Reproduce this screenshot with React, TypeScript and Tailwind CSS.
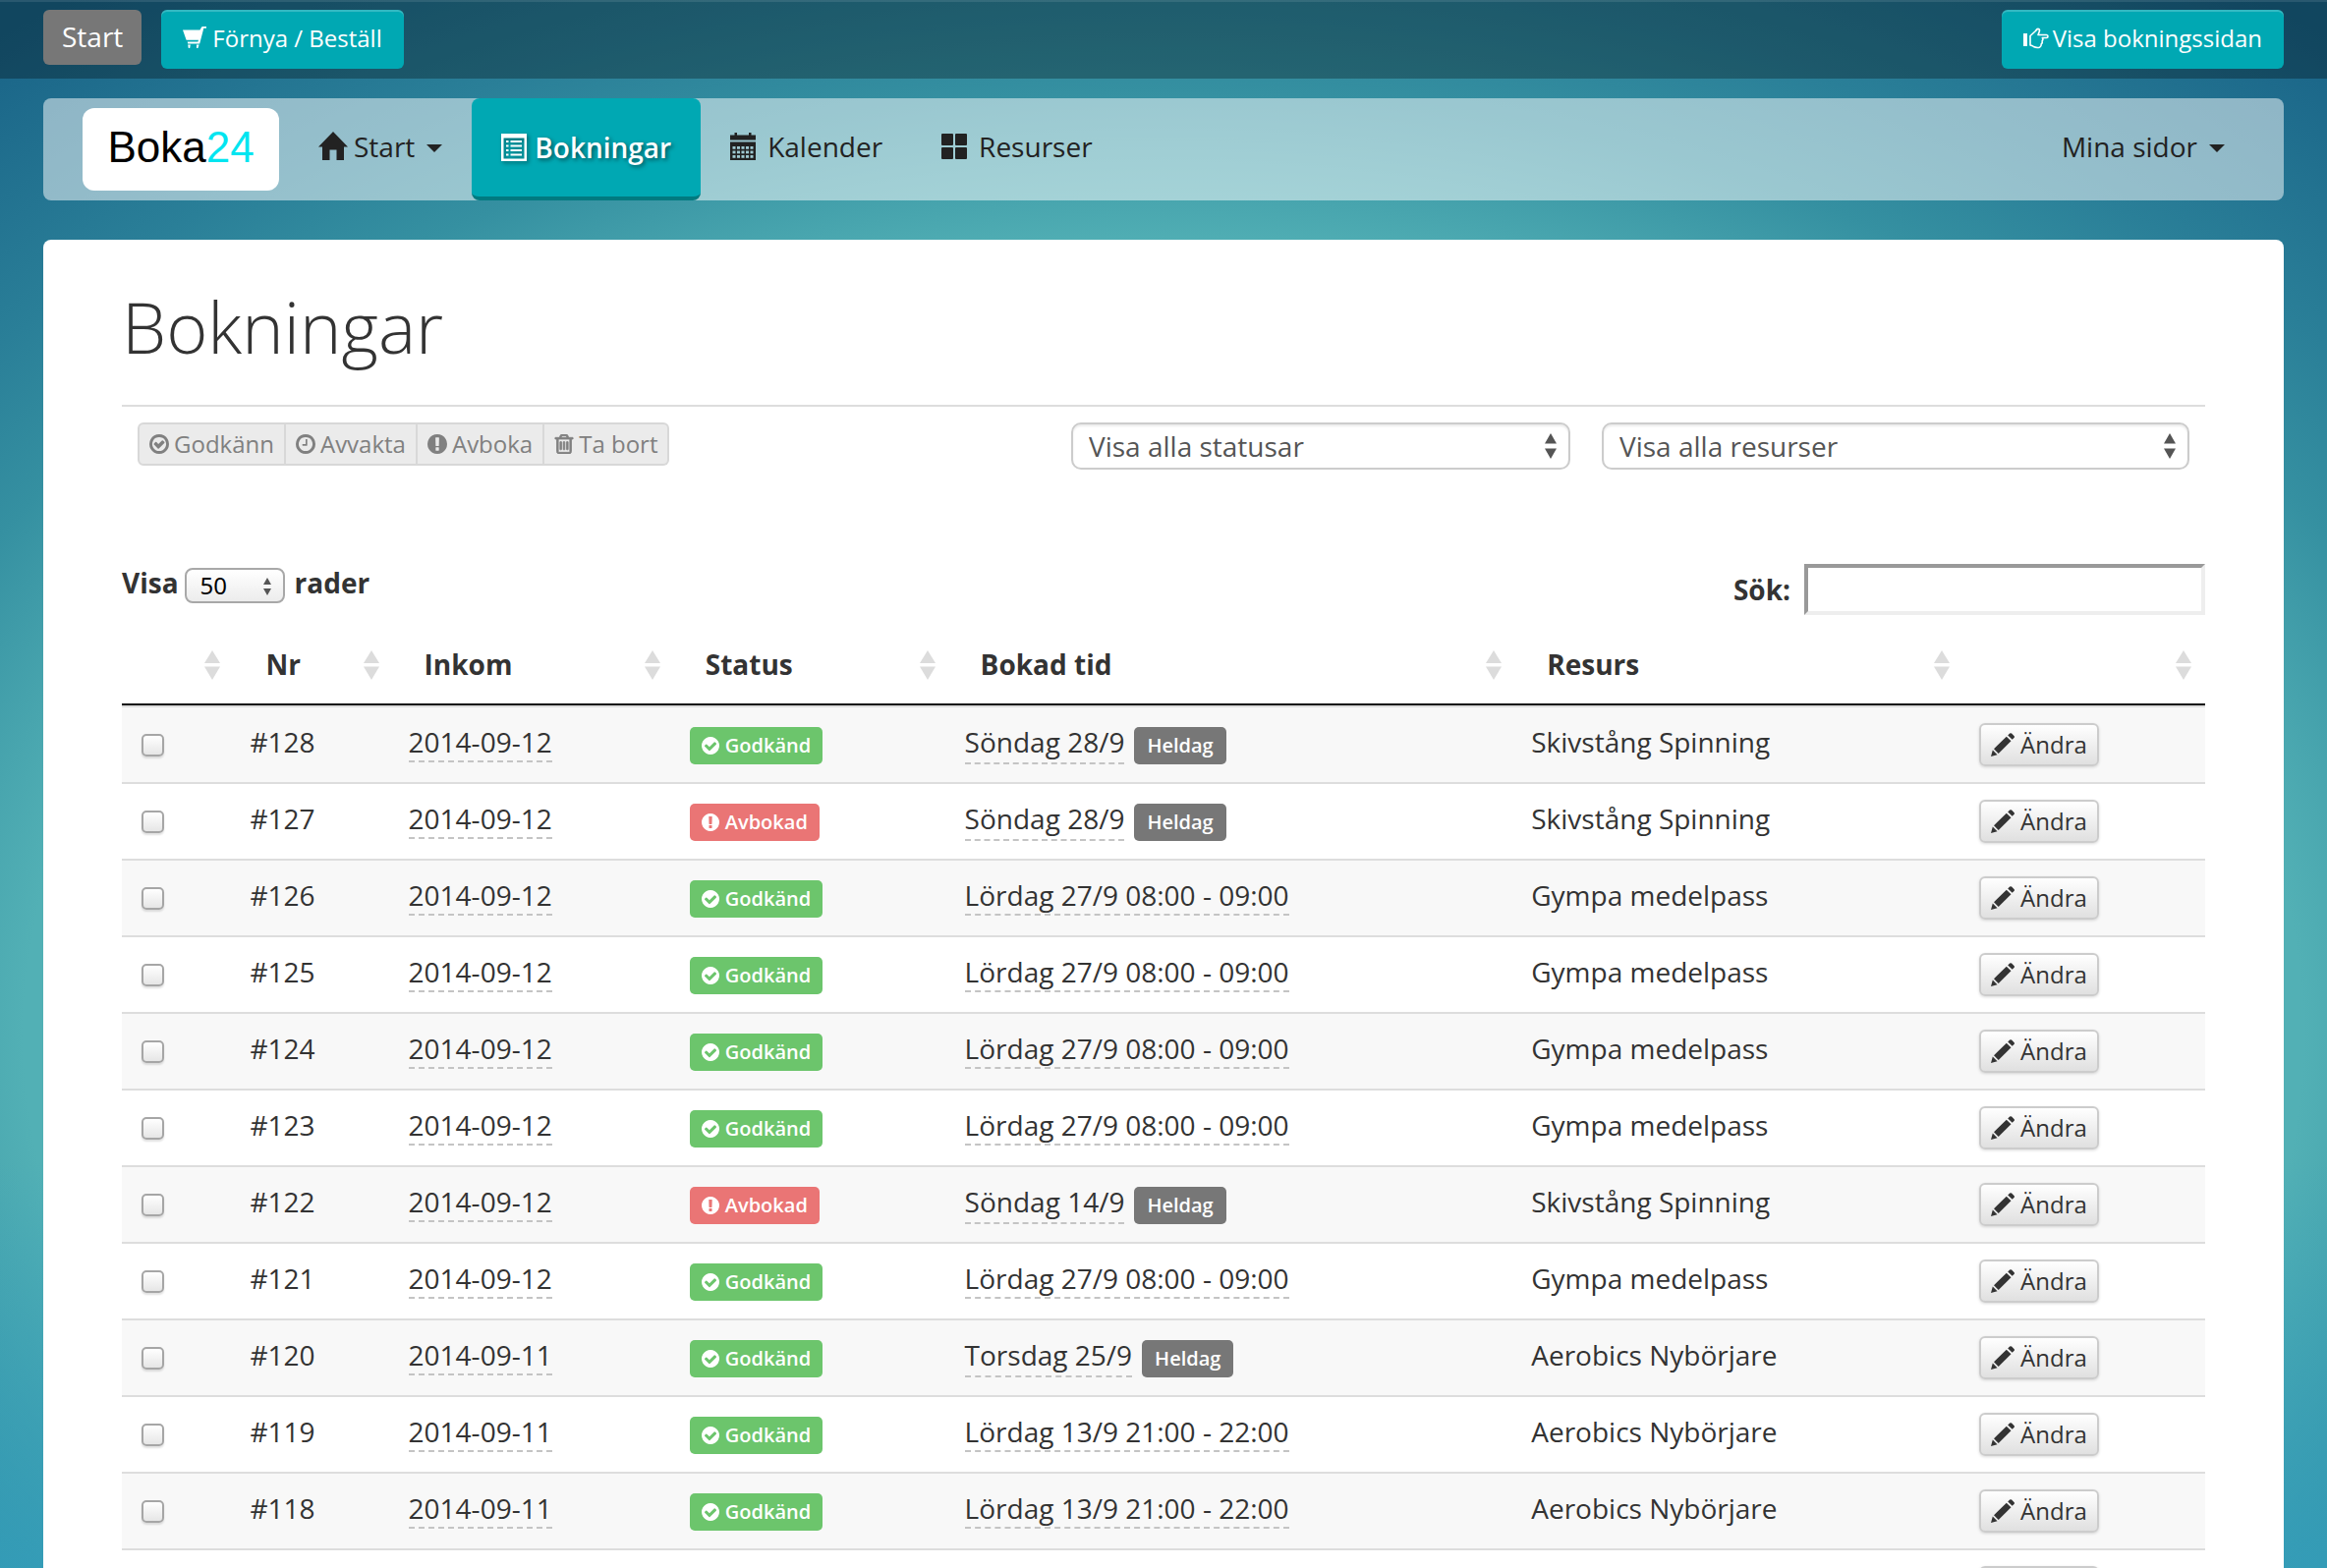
import { ReactNode } from "react";

type Booking = {
  nr: number;
  date: string;
  approved: boolean;
  time: string;
  allDay?: boolean;
  resource: string;
};

const bookings: Booking[] = [
  { nr: 128, date: "2014-09-12", approved: true, time: "Söndag 28/9", allDay: true, resource: "Skivstång Spinning" },
  { nr: 127, date: "2014-09-12", approved: false, time: "Söndag 28/9", allDay: true, resource: "Skivstång Spinning" },
  { nr: 126, date: "2014-09-12", approved: true, time: "Lördag 27/9 08:00 - 09:00", resource: "Gympa medelpass" },
  { nr: 125, date: "2014-09-12", approved: true, time: "Lördag 27/9 08:00 - 09:00", resource: "Gympa medelpass" },
  { nr: 124, date: "2014-09-12", approved: true, time: "Lördag 27/9 08:00 - 09:00", resource: "Gympa medelpass" },
  { nr: 123, date: "2014-09-12", approved: true, time: "Lördag 27/9 08:00 - 09:00", resource: "Gympa medelpass" },
  { nr: 122, date: "2014-09-12", approved: false, time: "Söndag 14/9", allDay: true, resource: "Skivstång Spinning" },
  { nr: 121, date: "2014-09-12", approved: true, time: "Lördag 27/9 08:00 - 09:00", resource: "Gympa medelpass" },
  { nr: 120, date: "2014-09-11", approved: true, time: "Torsdag 25/9", allDay: true, resource: "Aerobics Nybörjare" },
  { nr: 119, date: "2014-09-11", approved: true, time: "Lördag 13/9 21:00 - 22:00", resource: "Aerobics Nybörjare" },
  { nr: 118, date: "2014-09-11", approved: true, time: "Lördag 13/9 21:00 - 22:00", resource: "Aerobics Nybörjare" },
  { nr: 117, date: "2014-09-11", approved: true, time: "Lördag 13/9 21:00 - 22:00", resource: "Aerobics Nybörjare" },
];

const columns = [
  { title: "", width: "w-[5.4%]" },
  { title: "Nr", width: "w-[7.6%]" },
  { title: "Inkom", width: "w-[13.5%]" },
  { title: "Status", width: "w-[13.2%]" },
  { title: "Bokad tid", width: "w-[27.2%]" },
  { title: "Resurs", width: "w-[21.5%]" },
  { title: "", width: "w-[11.6%]" },
];

const ring =
  "M1440 896q0-148-73-273t-198-198-273-73-273 73-198 198-73 273 73 273 198 198 273 73 273-73 198-198 73-273zm224 0q0 209-103 385.5t-279.5 279.5-385.5 103-385.5-103-279.5-279.5-103-385.5 103-385.5 279.5-279.5 385.5-103 385.5 103 279.5 279.5 103 385.5z";

const glyphs = {
  checkOutline:
    "M1299 813l-422 422q-19 19-45 19t-45-19l-294-294q-19-19-19-45t19-45l102-102q19-19 45-19t45 19l147 147 275-275q19-19 45-19t45 19l102 102q19 19 19 45t-19 45z" +
    ring,
  clock:
    "M1024 544v448q0 14-9 23t-23 9h-320q-14 0-23-9t-9-23v-64q0-14 9-23t23-9h224v-352q0-14 9-23t23-9h64q14 0 23 9t9 23z" +
    ring,
  check:
    "M1412 734q0-28-18-46l-91-90q-19-19-45-19t-45 19l-408 407-226-226q-19-19-45-19t-45 19l-91 90q-18 18-18 46 0 27 18 45l362 362q19 19 45 19 27 0 46-19l543-543q18-18 18-45zm252 162q0 209-103 385.5t-279.5 279.5-385.5 103-385.5-103-279.5-279.5-103-385.5 103-385.5 279.5-279.5 385.5-103 385.5 103 279.5 279.5 103 385.5z",
  exclamation:
    "M896 128q209 0 385.5 103t279.5 279.5 103 385.5-103 385.5-279.5 279.5-385.5 103-385.5-103-279.5-279.5-103-385.5 103-385.5 279.5-279.5 385.5-103zm128 1247v-190q0-14-9-23.5t-22-9.5h-192q-13 0-23 10t-10 23v190q0 13 10 23t23 10h192q13 0 22-9.5t9-23.5zm-2-344l18-621q0-12-10-18-10-8-24-8h-220q-14 0-24 8-10 6-10 18l17 621q0 10 10 17.5t24 7.5h185q14 0 23.5-7.5t10.5-17.5z",
  trash:
    "M704 736v576q0 14-9 23t-23 9h-64q-14 0-23-9t-9-23v-576q0-14 9-23t23-9h64q14 0 23 9t9 23zm256 0v576q0 14-9 23t-23 9h-64q-14 0-23-9t-9-23v-576q0-14 9-23t23-9h64q14 0 23 9t9 23zm256 0v576q0 14-9 23t-23 9h-64q-14 0-23-9t-9-23v-576q0-14 9-23t23-9h64q14 0 23 9t9 23zm128 724v-948h-896v948q0 22 7 40.5t14.5 27 10.5 8.5h832q3 0 10.5-8.5t14.5-27 7-40.5zm-672-1076h448l-48-117q-7-9-17-11h-317q-10 2-17 11zm928 32v64q0 14-9 23t-23 9h-96v948q0 83-47 143.5t-113 60.5h-832q-66 0-113-58.5t-47-141.5v-952h-96q-14 0-23-9t-9-23v-64q0-14 9-23t23-9h309l70-167q15-37 54-63t79-26h320q40 0 79 26t54 63l70 167h309q14 0 23 9t9 23z",
};

function Glyph({ name, className }: { name: keyof typeof glyphs; className: string }) {
  return (
    <svg viewBox="128 128 1536 1536" fill="currentColor" className={className} aria-hidden="true">
      <path d={glyphs[name]} stroke="currentColor" strokeWidth={name === "trash" ? 60 : 0} />
    </svg>
  );
}

function CartIcon() {
  return (
    <svg viewBox="0 0 24 24" className="h-6 w-6" fill="currentColor" aria-hidden="true">
      <path d="M0 3.500h17.500L19 .800q.300-.800 1.200-.800H24v1.800h-2.700L17.200 17.500H5.200l-.500-2h10.700l.600-1.800H3.600z" />
      <path d="M5.200 18.500h2.600l-.600 3.500H5.800zM14 18.500h2.600L15.400 22H14z" />
    </svg>
  );
}

function HandIcon() {
  return (
    <svg viewBox="0 0 26 22" className="h-[22px] w-[26px]" aria-hidden="true">
      <path d="M0 6h4v13H0z" fill="currentColor" />
      <path
        d="M7 18V8.500l5.500-5Q14 1 15.500 1.500q1.500.700.800 2.500L15 7.500h8.500Q25 7.600 25 9t-1.500 1.500h-4.200q1.300 1.700-.200 3.200.800 1.900-.900 3.200.300 2.300-1.700 3.300-3.500.700-6-.700Q9 18.300 7 18z"
        fill="none"
        stroke="currentColor"
        strokeWidth="1.600"
        strokeLinejoin="round"
      />
    </svg>
  );
}

function HomeIcon() {
  return (
    <svg viewBox="0 0 30 30" className="h-[30px] w-[30px]" fill="currentColor" aria-hidden="true">
      <path d="M15 0l15 15.500h-4V29h-7.500V18.500h-7V29H4V15.500H0z" />
    </svg>
  );
}

function ListIcon() {
  return (
    <svg viewBox="0 0 26 28" className="h-7 w-[26px] drop-shadow-[2px_2px_2px_rgba(0,0,0,0.4)]" fill="currentColor" aria-hidden="true">
      <path fillRule="evenodd" d="M0 0h26v28H0zM2.500 4.500v21h21v-21z" />
      <path d="M5 7h2.500v2H5zM9.500 7H21v2H9.500zM5 11.500h2.500v2H5zM9.500 11.500H21v2H9.500zM5 16h2.500v2H5zM9.500 16H21v2H9.500zM5 20.500h2.500v2H5zM9.500 20.500H21v2H9.500z" />
    </svg>
  );
}

function CalendarIcon() {
  return (
    <svg viewBox="0 0 26 28" className="mr-1.5 h-7 w-[26px]" aria-hidden="true">
      <path d="M0 2.500h4.500V0H7v2.500h12V0h2.500v2.500H26v5H0zM0 9.500h26V28H0z" fill="currentColor" />
      {[14, 18.5, 23].map((y) =>
        [2.5, 7, 11.5, 16, 20.5].map((x) => (
          <path key={`${x}-${y}`} d={`M${x} ${y}h3v2.800h-3z`} fill="#9ec8d0" />
        ))
      )}
    </svg>
  );
}

function GridIcon() {
  return (
    <svg viewBox="0 0 26 26" className="mr-1.5 h-[26px] w-[26px]" fill="currentColor" aria-hidden="true">
      <rect width="12" height="12" rx="1" />
      <rect x="14" width="12" height="12" rx="1" />
      <rect y="14" width="12" height="12" rx="1" />
      <rect x="14" y="14" width="12" height="12" rx="1" />
    </svg>
  );
}

function PencilIcon() {
  return (
    <svg viewBox="0 0 24 24" className="h-6 w-6" fill="currentColor" aria-hidden="true">
      <path d="M0 24l1.800-6.500 4.700 4.700zM3 16.200L15.800 3.800l4.700 4.500L7.700 21zM17.200 2.500l1.900-1.900q1-.900 2 0l2.400 2.300q1 1 0 2l-1.800 1.900z" />
    </svg>
  );
}

function Caret() {
  return (
    <svg viewBox="0 0 16 8" className="mt-1 h-2 w-4" fill="currentColor" aria-hidden="true">
      <path d="M0 0h16L8 8z" />
    </svg>
  );
}

function SortIcon() {
  return (
    <svg viewBox="0 0 16 30" className="mt-0.5 h-[30px] w-4" fill="#dcdcdc" aria-hidden="true">
      <path d="M8 0l8 13H0zM0 16.500h16L8 30z" />
    </svg>
  );
}

function NavItem({ icon, label, active, caret }: { icon?: ReactNode; label: string; active?: boolean; caret?: boolean }) {
  return (
    <a
      href="#"
      className={
        active
          ? "flex h-full items-center gap-2 rounded-lg border-b-4 border-[#007a80] bg-[#00a8b3] px-[30px] font-semibold text-white [text-shadow:2px_2px_4px_rgba(0,0,0,0.5)]"
          : "flex h-full items-center gap-1.5 px-[30px] pb-1.5 text-[#222]"
      }
    >
      {icon}
      {label}
      {caret && (
        <span className="pl-1.5">
          <Caret />
        </span>
      )}
    </a>
  );
}

function FilterSelect({ label, className }: { label: string; className: string }) {
  return (
    <div className={className}>
      <select
        aria-label={label}
        className="h-12 w-full appearance-none rounded-[10px] border-2 border-[#ccc] bg-white px-4 text-[28px] leading-none text-[#555] shadow-[inset_0_2px_2px_rgba(0,0,0,0.08)]"
      >
        <option>{label}</option>
      </select>
      <svg viewBox="0 0 12 26" className="pointer-events-none absolute top-[11px] right-[14px] h-[26px] w-3" fill="#555" aria-hidden="true">
        <path d="M6 0l6 10.500H0zM0 15.500h12L6 26z" />
      </svg>
    </div>
  );
}

function ActionButton({ icon, label }: { icon: keyof typeof glyphs; label: string }) {
  return (
    <button
      disabled
      className="flex h-11 items-center gap-[5px] border-2 border-l-0 border-[#d8d8d8] bg-[#ebebeb] px-2.5 text-[24px] leading-8 text-[#808080] first:rounded-l-md first:border-l-2 last:rounded-r-md"
    >
      <Glyph name={icon} className="h-5 w-5" />
      {label}
    </button>
  );
}

function StatusBadge({ approved }: { approved: boolean }) {
  return (
    <span
      className={
        approved
          ? "mt-1 flex h-[38px] w-fit items-center gap-1.5 rounded-[5px] bg-[#6cc56c] px-3 text-[20px] font-semibold text-white"
          : "mt-1 flex h-[38px] w-fit items-center gap-1.5 rounded-[5px] bg-[#ea7575] px-3 text-[20px] font-semibold text-white"
      }
    >
      <Glyph name={approved ? "check" : "exclamation"} className="h-[18px] w-[18px]" />
      {approved ? "Godkänd" : "Avbokad"}
    </span>
  );
}

function BookingRow({ booking }: { booking: Booking }) {
  const cell = "border-t-2 border-[#ddd] px-4 py-4 align-top leading-[38px]";
  return (
    <tr className="odd:bg-[#f8f8f8]">
      <td className={cell}>
        <input
          type="checkbox"
          aria-label={`Välj bokning ${booking.nr}`}
          className="mt-[11px] ml-1 block h-[23px] w-[23px] appearance-none rounded-[5px] border-2 border-[#a6a6a6] bg-linear-to-b from-white to-[#e6e6e6] shadow-[0_2px_2px_rgba(0,0,0,0.12)]"
        />
      </td>
      <td className={cell}>#{booking.nr}</td>
      <td className={cell}>
        <a href="#" className="inline-block border-b-2 border-dashed border-[#c4c4c4]">{booking.date}</a>
      </td>
      <td className={cell}>
        <StatusBadge approved={booking.approved} />
      </td>
      <td className={cell}>
        <div className="flex gap-2.5">
          <a href="#" className="border-b-2 border-dashed border-[#c4c4c4]">{booking.time}</a>
          {booking.allDay && (
            <span className="mt-1 h-[38px] rounded-[5px] bg-[#777] px-[13px] text-[20px] font-semibold text-white">Heldag</span>
          )}
        </div>
      </td>
      <td className={cell}>{booking.resource}</td>
      <td className={cell}>
        <button className="flex h-11 items-center gap-1.5 rounded-md border-2 border-[#ccc] bg-linear-to-b from-white to-[#e0e0e0] px-2.5 text-[24px] leading-8 shadow-[0_1px_3px_rgba(0,0,0,0.15)]">
          <PencilIcon />
          Ändra
        </button>
      </td>
    </tr>
  );
}

export default function App() {
  return (
    <div className="h-screen overflow-hidden bg-[linear-gradient(to_bottom,transparent_74%,rgba(52,160,190,0.75)_100%),radial-gradient(ellipse_50%_51%_at_50%_66%,#52b0b5_0%,#52b0b5_98%,#3590a1_118%,#2a7f98_132%,#196387_160%)] font-['Open_Sans',sans-serif] text-[28px] text-[#333]">
      <header className="flex h-20 items-start justify-between bg-[rgba(0,0,0,0.29)] px-11 pt-2.5 text-white shadow-[inset_0_2px_0_rgba(255,255,255,0.1)]">
        <div className="flex items-start gap-5">
          <a href="#" className="flex h-14 items-center rounded-md bg-[#777] px-[19px] pb-0.5 font-medium">Start</a>
          <button className="flex h-[60px] items-center gap-1.5 rounded-md bg-[#00a8b3] px-[22px] pb-0.5 text-[24px] font-medium shadow-[inset_0_2px_0_rgba(255,255,255,0.2)]">
            <CartIcon />
            Förnya / Beställ
          </button>
        </div>
        <button className="flex h-[60px] items-center gap-1 rounded-md bg-[#00a8b3] px-[22px] pb-0.5 text-[24px] font-medium shadow-[inset_0_2px_0_rgba(255,255,255,0.2)]">
          <HandIcon />
          Visa bokningssidan
        </button>
      </header>

      <nav className="mx-11 mt-5 flex h-[104px] items-center justify-between rounded-lg bg-[rgba(255,255,255,0.5)] pr-[30px] pl-10">
        <div className="flex h-full items-center">
          <a href="#" className="mr-2.5 flex h-[84px] w-[200px] items-center justify-center rounded-xl bg-white pb-1 font-['Liberation_Sans',sans-serif] text-[44px] text-black">
            Boka<span className="text-[#00e5f0]">24</span>
          </a>
          <NavItem icon={<HomeIcon />} label="Start" caret />
          <NavItem icon={<ListIcon />} label="Bokningar" active />
          <NavItem icon={<CalendarIcon />} label="Kalender" />
          <NavItem icon={<GridIcon />} label="Resurser" />
        </div>
        <NavItem label="Mina sidor" caret />
      </nav>

      <main className="mx-11 mt-10 rounded-t-lg bg-white px-20 pt-12 pb-20">
        <h1 className="text-[72px] leading-[80px] font-light">Bokningar</h1>
        <hr className="mt-10 border-t-2 border-[#ddd]" />

        <div className="mt-4 flex items-start px-4">
          <div className="flex">
            <ActionButton icon="checkOutline" label="Godkänn" />
            <ActionButton icon="clock" label="Avvakta" />
            <ActionButton icon="exclamation" label="Avboka" />
            <ActionButton icon="trash" label="Ta bort" />
          </div>
          <FilterSelect label="Visa alla statusar" className="relative mr-8 ml-auto w-[508px]" />
          <FilterSelect label="Visa alla resurser" className="relative w-[598px]" />
        </div>

        <div className="mt-24 flex items-start justify-between font-bold">
          <label className="flex leading-[38px]">
            Visa
            <span className="relative mt-1 mr-2.5 ml-1.5">
              <select className="block h-9 w-[102px] appearance-none rounded-lg border-2 border-[#a8a8a8] bg-linear-to-b from-white to-[#ececec] pl-3.5 font-['Noto_Sans',sans-serif] text-[24px] leading-none font-normal text-black">
                <option>50</option>
              </select>
              <svg viewBox="0 0 8 18" className="pointer-events-none absolute top-[10px] right-[14px] h-[18px] w-2" fill="#555" aria-hidden="true">
                <path d="M4 0l4 7H0zM0 11h8l-4 7z" />
              </svg>
            </span>
            rader
          </label>
          <label className="flex items-center gap-3.5">
            Sök:
            <input type="text" className="h-[52px] w-[408px] border-4 border-t-[#999] border-r-[#eee] border-b-[#eee] border-l-[#999] bg-white px-2 font-normal" />
          </label>
        </div>

        <table className="mt-2 w-full table-fixed border-separate border-spacing-0">
          <thead>
            <tr>
              {columns.map((column, i) => (
                <th key={i} className={`${column.width} h-[84px] border-b-2 border-[#111] pt-0.5 pr-[14px] pl-8 text-left font-bold`}>
                  <div className="flex items-center justify-between">
                    <span>{column.title}</span>
                    <SortIcon />
                  </div>
                </th>
              ))}
            </tr>
          </thead>
          <tbody>
            {bookings.map((booking) => (
              <BookingRow key={booking.nr} booking={booking} />
            ))}
          </tbody>
        </table>
      </main>
    </div>
  );
}
